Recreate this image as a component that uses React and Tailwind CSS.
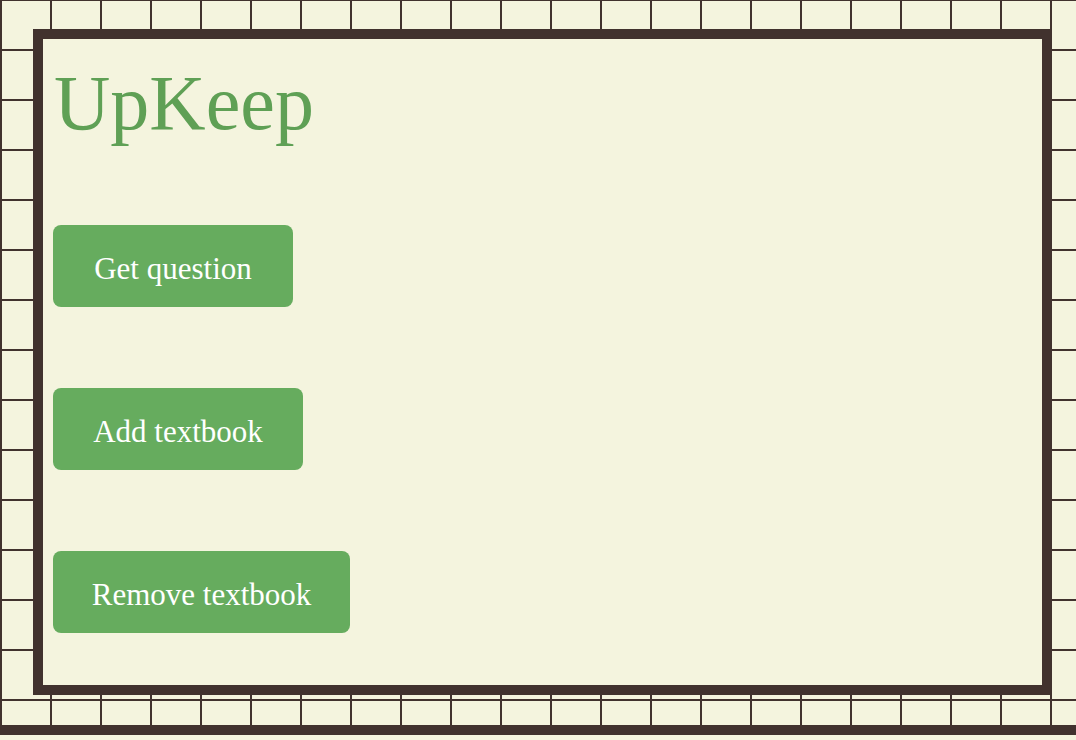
import React from "react";

const buttons = [
  { label: "Get question", width: "w-[240px]" },
  { label: "Add textbook", width: "w-[250px]" },
  { label: "Remove textbook", width: "w-[297px]" },
];

const App = () => {
  return (
    <div className="min-h-[740px] bg-[#f4f4de] font-['Liberation_Serif',serif]">
      <div className="h-[725px] overflow-hidden pt-[29px] pl-[33px] bg-[linear-gradient(to_right,#41322e_2px,transparent_2px),linear-gradient(to_bottom,#41322e_2px,transparent_2px)] bg-[size:50px_50px] bg-[position:0_-1px]">
        <div className="w-[1019px] h-[666px] border-[10px] border-[#41322e] bg-[#f4f4de] p-[10px]">
          <h1 className="mt-[15px] ml-px h-[78px] text-[78px] leading-none text-[#5fa055]">UpKeep</h1>
          <div className="mt-[83px] flex flex-col gap-[81px]">
            {buttons.map((b) => (
              <button
                key={b.label}
                className={`${b.width} h-[82px] pt-[6px] rounded-lg bg-[#66ac5e] text-[31px] text-white text-center`}
              >
                {b.label}
              </button>
            ))}
          </div>
        </div>
      </div>
      <div className="h-[10px] bg-[#41322e]" />
    </div>
  );
};

export default App;
